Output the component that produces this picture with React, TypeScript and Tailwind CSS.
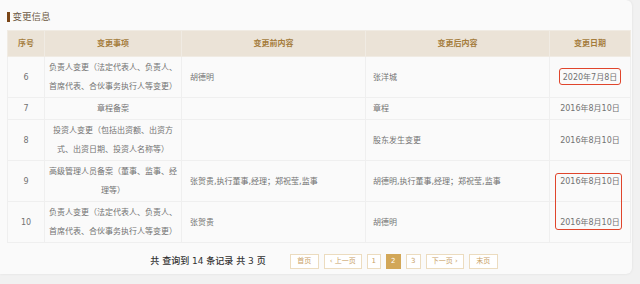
import React from "react";

// 变更记录数据
const rows = [
  {
    no: 6,
    item: "负责人变更（法定代表人、负责人、首席代表、合伙事务执行人等变更）",
    before: "胡德明",
    after: "张洋城",
    date: "2020年7月8日",
  },
  { no: 7, item: "章程备案", before: "", after: "章程", date: "2016年8月10日" },
  {
    no: 8,
    item: "投资人变更（包括出资额、出资方式、出资日期、投资人名称等）",
    before: "",
    after: "股东发生变更",
    date: "2016年8月10日",
  },
  {
    no: 9,
    item: "高级管理人员备案（董事、监事、经理等）",
    before: "张贺贵,执行董事,经理；郑祝莹,监事",
    after: "胡德明,执行董事,经理；郑祝莹,监事",
    date: "2016年8月10日",
  },
  {
    no: 10,
    item: "负责人变更（法定代表人、负责人、首席代表、合伙事务执行人等变更）",
    before: "张贺贵",
    after: "胡德明",
    date: "2016年8月10日",
  },
];

const pages = [
  { label: "首页", w: "w-[29px]" },
  { label: "‹ 上一页", w: "w-[38px]" },
  { label: "1", w: "w-[14px]" },
  { label: "2", w: "w-[15px]", active: true },
  { label: "3", w: "w-[15px]" },
  { label: "下一页 ›", w: "w-[38px]" },
  { label: "末页", w: "w-[29px]" },
];

export default function App() {
  return (
    <div
      className="w-[640px] h-[284px] bg-[#f1f1f1] overflow-hidden"
      style={{ fontFamily: '"DejaVu Sans", "Noto Sans CJK SC", sans-serif' }}
    >
      <div className="relative w-[632px] h-[274px] bg-[#fafafa] rounded-r-md shadow-[0_0_3px_rgba(0,0,0,0.08)] pl-[7px] pr-[2px]">
        {/* 标题 */}
        <div className="flex items-center h-[30px] pt-[4px]">
          <span className="w-[2.5px] h-[10px] bg-[#7a4617] mr-[3px]" />
          <span className="text-[9.5px] text-[#6e5a46]">变更信息</span>
        </div>

        {/* 表格 */}
        <table className="w-[623px] table-fixed border-collapse text-[8px] text-[#727272]">
          <colgroup>
            <col className="w-[37px]" />
            <col className="w-[137px]" />
            <col className="w-[184px]" />
            <col className="w-[184px]" />
            <col className="w-[81px]" />
          </colgroup>
          <thead>
            <tr className="h-[26px] bg-[#ebe3d7] text-[#a57c3c] font-bold">
              <th className="border border-[#f0ebe3]">序号</th>
              <th className="border border-[#f0ebe3]">变更事项</th>
              <th className="border border-[#f0ebe3]">变更前内容</th>
              <th className="border border-[#f0ebe3]">变更后内容</th>
              <th className="border border-[#f0ebe3]">变更日期</th>
            </tr>
          </thead>
          <tbody>
            {rows.map((r) => (
              <tr key={r.no} className="leading-[19px]">
                <td className="border border-[#efefef] text-center py-[1px]">{r.no}</td>
                <td className="border border-[#efefef] text-center py-[1px] px-[3px]">{r.item}</td>
                <td className="border border-[#efefef] py-[1px] px-[8px]">{r.before}</td>
                <td className="border border-[#efefef] py-[1px] px-[7px]">{r.after}</td>
                <td className="border border-[#efefef] text-center py-[1px] whitespace-nowrap">{r.date}</td>
              </tr>
            ))}
          </tbody>
        </table>

        {/* 分页 */}
        <div className="flex items-center justify-center pt-[11px] pl-[11px]">
          <span className="text-[9px] font-medium text-[#333] mr-[24px]">共 查询到 14 条记录 共 3 页</span>
          <div className="flex gap-[5px]">
            {pages.map((p) => (
              <span
                key={p.label}
                className={
                  "h-[15px] flex items-center justify-center text-[7px] border " +
                  p.w +
                  (p.active
                    ? " bg-[#d2a758] border-[#d2a758] text-white"
                    : " bg-white border-[#ecdcbf] text-[#c9a267]")
                }
              >
                {p.label}
              </span>
            ))}
          </div>
        </div>

        {/* 红框标注 */}
        <div className="absolute left-[559px] top-[68px] w-[62px] h-[17px] border-[1.5px] border-[#e0452c] rounded-[3px]" />
        <div className="absolute left-[555px] top-[173px] w-[67px] h-[57px] border-[1.5px] border-[#e0452c] rounded-[3px]" />
      </div>
    </div>
  );
}
